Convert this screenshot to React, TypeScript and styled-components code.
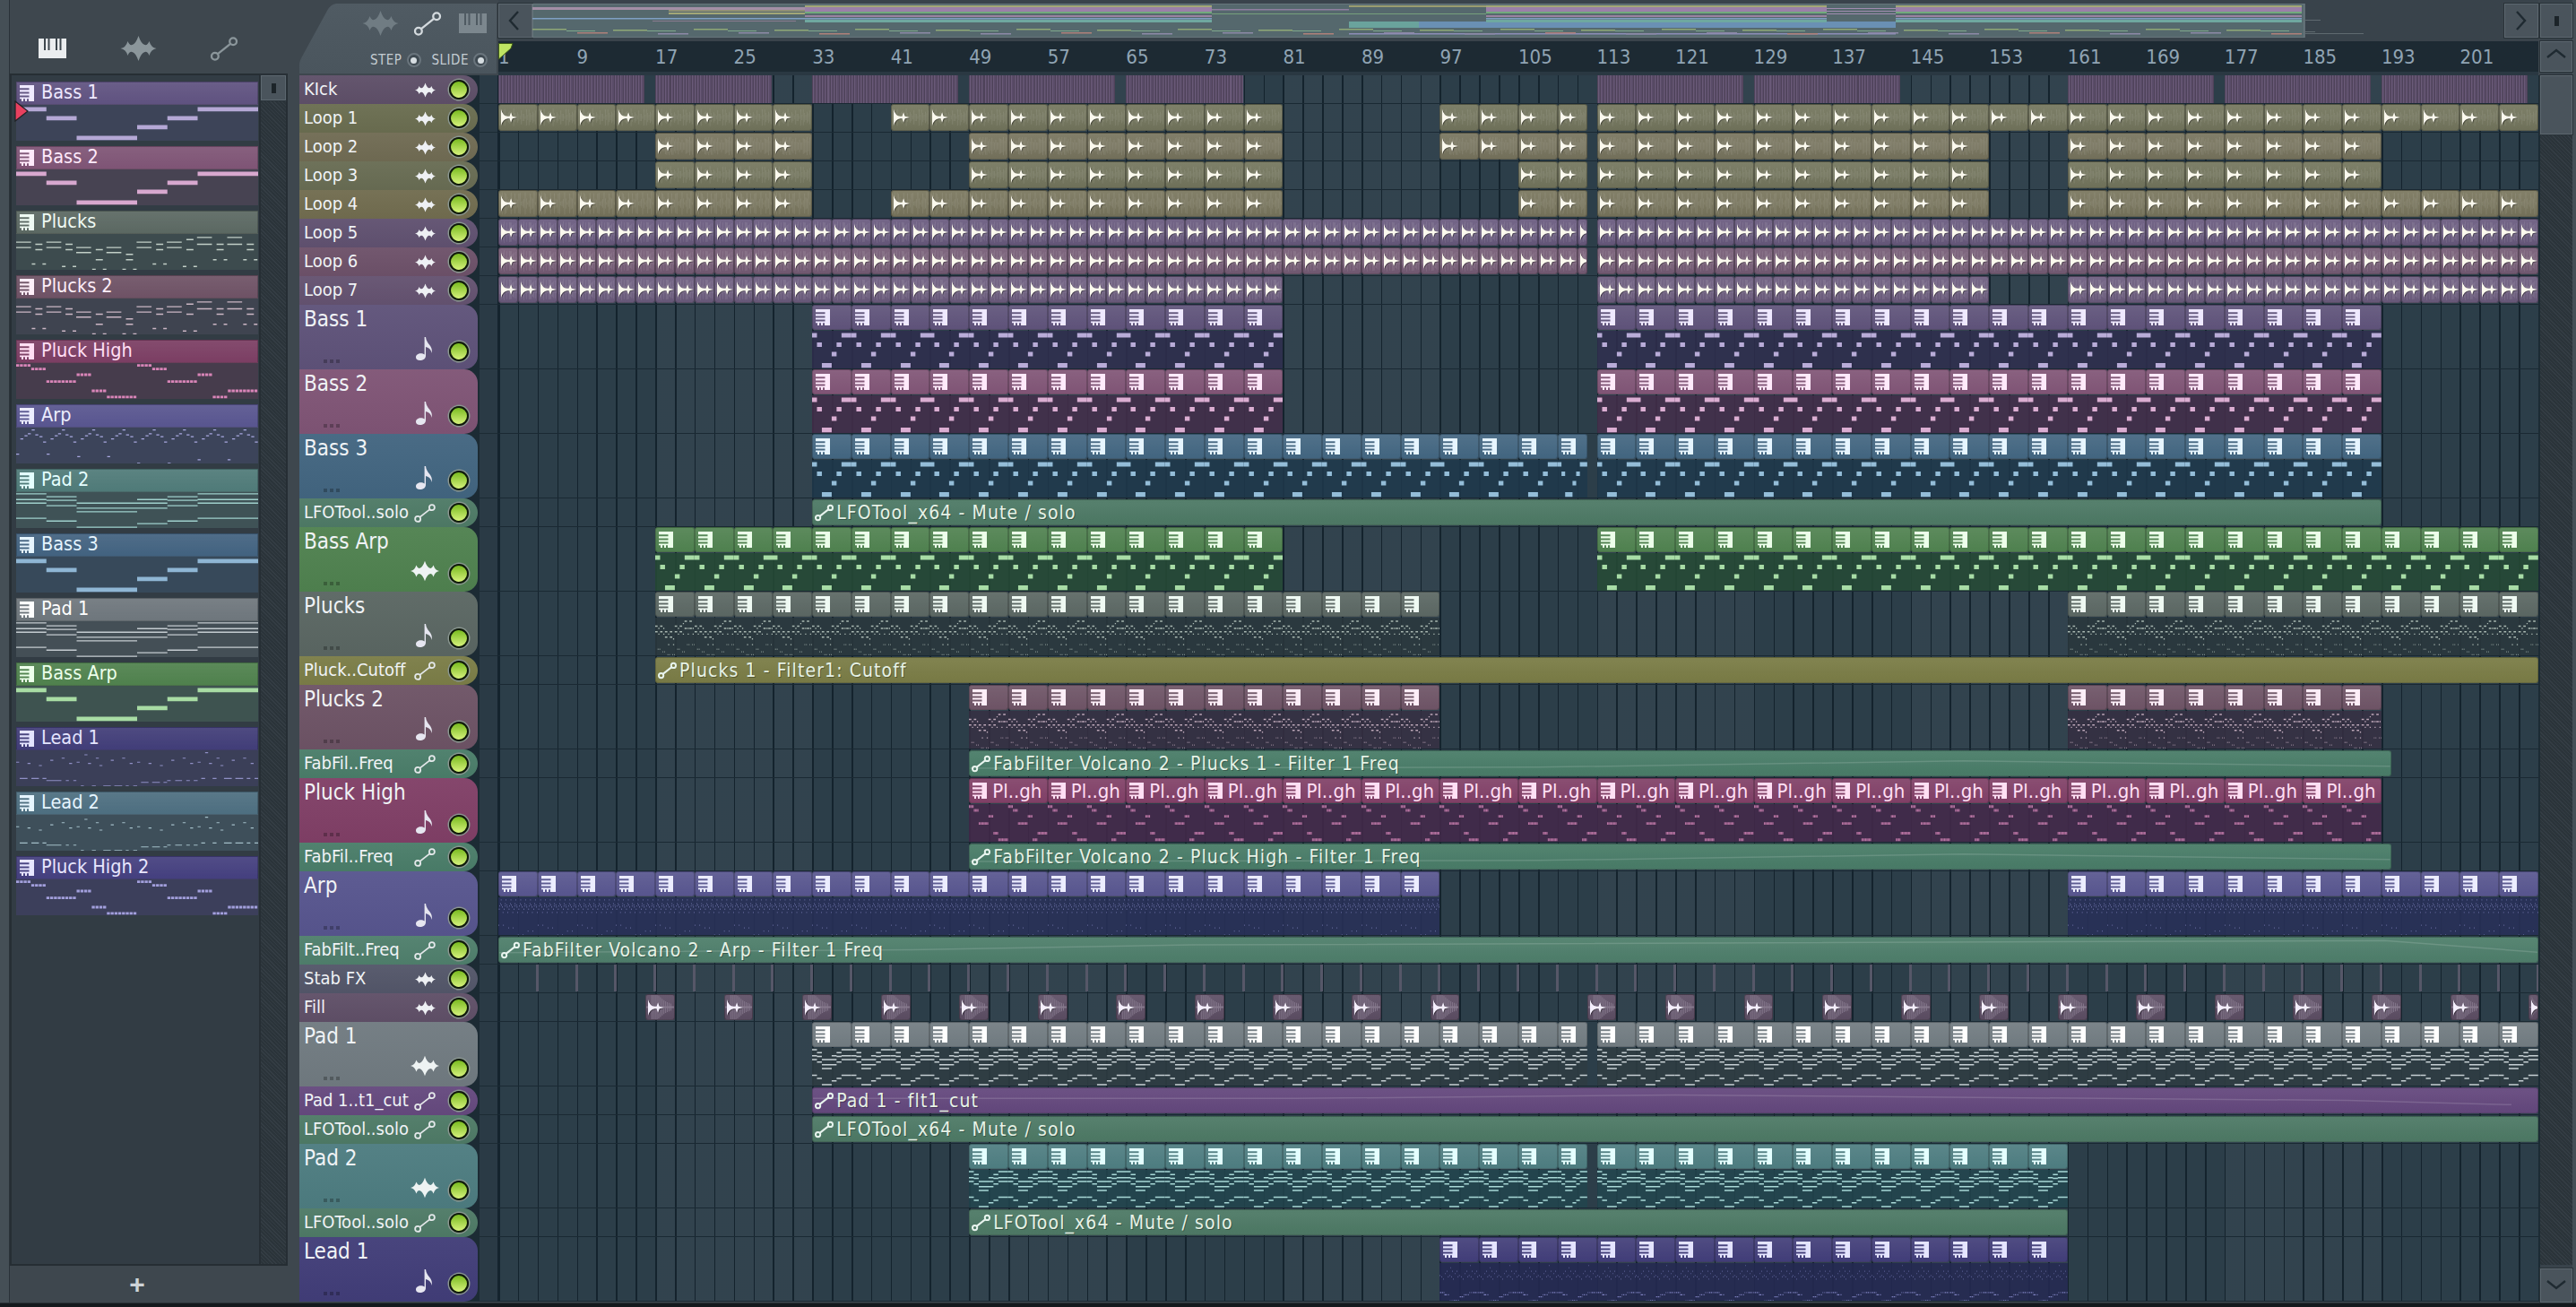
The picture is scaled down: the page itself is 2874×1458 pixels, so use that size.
import React from "react";
import styled, { createGlobalStyle } from "styled-components";

const FONT = `"DejaVu Sans Condensed", "Liberation Sans", sans-serif`;

const Global = createGlobalStyle`
  html, body { margin: 0; padding: 0; background: #3e474e; }
  #root { width: 2874px; height: 1458px; }
`;

/* ---------- pattern data ---------- */
type Note = [number, number, number, number];

const pathOf = (notes: Note[]) =>
  notes
    .map(([a, b, y, h]) => `M${(a * 1000).toFixed(1)} ${(y * 1000).toFixed(1)}H${(b * 1000).toFixed(1)}V${((y + h) * 1000).toFixed(1)}H${(a * 1000).toFixed(1)}Z`)
    .join("");

const bass: Note[] = [
  [0, 0.125, 0.06, 0.12],
  [0.125, 0.25, 0.31, 0.12],
  [0.25, 0.5, 0.86, 0.12],
  [0.5, 0.625, 0.56, 0.12],
  [0.625, 0.75, 0.31, 0.12],
  [0.75, 1, 0.06, 0.12],
];

const padRows: [number, number, number[]][] = [
  [0, 0.125, [0.04, 0.2, 0.3, 0.72]],
  [0.125, 0.25, [0.12, 0.22, 0.37, 0.8]],
  [0.25, 0.5, [0.3, 0.44, 0.54, 0.97]],
  [0.5, 0.625, [0.2, 0.3, 0.44, 0.87]],
  [0.625, 0.75, [0.12, 0.22, 0.37, 0.8]],
  [0.75, 1, [0.04, 0.2, 0.3, 0.72]],
];
const pad: Note[] = padRows.flatMap(([a, b, ys]) => ys.map((y) => [a, b, y - 0.01, 0.035] as Note));

const pl = (x0: number, x1: number, y: number): Note => [(x0 - 46) / 681, (x1 - 46) / 681, y, 0.035];
const plucks: Note[] = [
  pl(555, 597, 0.08), pl(640, 682, 0.08), pl(525, 545, 0.14),
  pl(46, 88, 0.21), pl(131, 173, 0.21), pl(385, 427, 0.21), pl(470, 512, 0.21),
  pl(46, 88, 0.36), pl(131, 173, 0.36), pl(385, 427, 0.36), pl(470, 512, 0.36),
  pl(100, 120, 0.27), pl(185, 205, 0.27), pl(440, 460, 0.27),
  pl(100, 120, 0.42), pl(185, 205, 0.42), pl(440, 460, 0.42),
  pl(215, 257, 0.36), pl(300, 342, 0.36), pl(215, 257, 0.5), pl(300, 342, 0.5),
  pl(270, 290, 0.42), pl(355, 375, 0.55),
  pl(525, 545, 0.42), pl(555, 597, 0.27), pl(640, 682, 0.27),
  pl(610, 630, 0.27), pl(610, 630, 0.42), pl(695, 715, 0.27), pl(695, 715, 0.42),
  pl(270, 290, 0.7), pl(355, 375, 0.7),
  pl(90, 100, 0.82), pl(120, 130, 0.82), pl(175, 185, 0.89), pl(205, 215, 0.89),
  pl(260, 270, 0.97), pl(290, 300, 0.97), pl(345, 355, 0.97), pl(375, 385, 0.97),
  pl(430, 440, 0.82), pl(460, 470, 0.82), pl(515, 525, 0.89), pl(545, 555, 0.89),
  pl(600, 610, 0.7), pl(630, 640, 0.7), pl(685, 695, 0.7), pl(715, 725, 0.7),
];

const squares = (from: number, to: number, y: number): Note[] => {
  const out: Note[] = [];
  for (let x = from; x < to - 0.001; x += 1 / 64) out.push([x, x + 1 / 80, y, 0.07]);
  return out;
};
const pluckHigh: Note[] = [
  ...squares(0, 0.0625, 0.03), ...squares(0.5, 0.5625, 0.03),
  ...squares(0.0625, 0.125, 0.13), ...squares(0.5625, 0.625, 0.13),
  ...squares(0.25, 0.3125, 0.29), ...squares(0.75, 0.8125, 0.29),
  ...squares(0.125, 0.25, 0.48), ...squares(0.625, 0.75, 0.48),
  ...squares(0.3125, 0.375, 0.74), ...squares(0.875, 1, 0.74),
  ...squares(0.375, 0.5, 0.91), ...squares(0.8125, 0.875, 0.91),
];

const ar = (x: number, y: number, w = 10): Note => [(x - 24) / 808, (x + w - 24) / 808, (y - 320) / 117, 0.032];
const arp: Note[] = [
  ...Array.from({ length: 8 }).flatMap((_, k) => {
    const o = k * 101;
    return [
      ar(38 + o, 355), ar(52 + o, 345), ar(63 + o, 338), ar(76 + o, 326),
      ar(88 + o, 342), ar(102 + o, 348), ar(114 + o, 365),
    ];
  }),
  ar(24, 405), ar(126, 405), ar(228, 413), ar(328, 413), ar(428, 435), ar(530, 435), ar(630, 423), ar(730, 423),
];

const le = (x: number, y: number, w = 10): Note => [(x - 24) / 808, (x + w - 24) / 808, (y - 320) / 117, 0.028];
const lead: Note[] = [
  ...([
    [24, 357], [62, 361], [100, 368], [138, 351], [176, 344], [201, 361], [226, 357], [252, 333], [264, 361],
    [290, 344], [302, 368], [340, 351], [378, 344], [403, 361], [428, 357], [466, 361], [504, 368], [542, 351],
    [580, 344], [605, 361], [630, 357], [655, 326], [668, 361], [693, 344], [706, 368], [744, 351], [782, 344], [807, 361],
  ] as [number, number][]).map(([x, y]) => le(x, y)),
  ...([
    [36, 410, 26], [75, 410, 25], [112, 410, 13], [125, 417, 25], [150, 417, 25], [190, 417, 10], [215, 417, 10],
    [240, 435, 10], [277, 435, 13], [315, 435, 25], [352, 435, 26], [390, 435, 10], [415, 435, 13],
    [441, 423, 25], [478, 423, 26], [516, 423, 12], [528, 417, 12], [555, 417, 23], [592, 417, 12], [617, 417, 13],
    [642, 410, 13], [680, 410, 13], [718, 410, 26], [756, 410, 26], [794, 410, 12], [820, 410, 12],
  ] as [number, number, number][]).map(([x, y, w]) => le(x, y, w)),
];

const PATTERNS: Record<string, string> = {
  bass: pathOf(bass),
  pad: pathOf(pad),
  plucks: pathOf(plucks),
  pluckHigh: pathOf(pluckHigh),
  arp: pathOf(arp),
  lead: pathOf(lead),
};

/* deterministic waveform */
const wavePath = (seed: number, base: number, spread: number, w = 88, h = 60, step = 3) => {
  let s = seed;
  const rnd = () => {
    s = (s * 9301 + 49297) % 233280;
    return s / 233280;
  };
  let d = "";
  for (let x = 1; x < w; x += step) {
    const a = base + rnd() * spread;
    d += `M${x} ${h / 2 - a}V${h / 2 + a}`;
  }
  return d;
};
const fillWave = () => {
  let d = "M0 29H88V31H0Z";
  for (let x = 6; x < 30; x += 2) {
    const a = 26 * Math.exp(-(x - 6) / 12);
    d += `M${x} ${30 - a}h1V${30 + a}h-1Z`;
  }
  return d;
};

/* ---------- track data ---------- */
type Seg = [number, number];
type Track = {
  name: string;
  tall?: boolean;
  color: string;
  clip?: string;
  icon: "wave" | "note" | "auto";
  kind?: "kick" | "audio" | "midi" | "auto" | "stab" | "fill";
  segs?: Seg[];
  size?: number;
  wave?: string;
  body?: string;
  noteColor?: string;
  pattern?: string;
  label?: string;
  text?: string;
  curve?: string;
  ink?: string;
};

const WAVE_A = wavePath(17, 3, 19);
const WAVE_B = wavePath(51, 8, 14);
const WAVE_C = wavePath(91, 2, 26);
const WAVE_D = wavePath(77, 5, 22, 44, 60, 2.2);

const TRACKS: Track[] = [
  { name: "KIck", color: "#5e4f68", icon: "wave", kind: "kick", segs: [[1, 16], [17, 29], [33, 48], [49, 64], [65, 77], [113, 128], [129, 144], [161, 176], [177, 192], [193, 208]] },
  { name: "Loop 1", color: "#6a6d50", clip: "#75775f", icon: "wave", kind: "audio", size: 4, wave: WAVE_A, segs: [[1, 33], [41, 81], [97, 112], [113, 209]] },
  { name: "Loop 2", color: "#706b53", clip: "#7a7660", icon: "wave", kind: "audio", size: 4, wave: WAVE_B, segs: [[17, 33], [49, 81], [97, 112], [113, 153], [161, 193]] },
  { name: "Loop 3", color: "#686c53", clip: "#75775f", icon: "wave", kind: "audio", size: 4, wave: WAVE_A, segs: [[17, 33], [49, 81], [105, 112], [113, 153], [161, 193]] },
  { name: "Loop 4", color: "#716c4f", clip: "#7b785f", icon: "wave", kind: "audio", size: 4, wave: WAVE_C, segs: [[1, 33], [41, 81], [105, 112], [113, 153], [161, 209]] },
  { name: "Loop 5", color: "#605170", clip: "#6b5c80", icon: "wave", kind: "audio", size: 2, wave: WAVE_D, segs: [[1, 112], [113, 209]] },
  { name: "Loop 6", color: "#6d5169", clip: "#775e78", icon: "wave", kind: "audio", size: 2, wave: WAVE_D, segs: [[1, 112], [113, 209]] },
  { name: "Loop 7", color: "#645270", clip: "#6e5e80", icon: "wave", kind: "audio", size: 2, wave: WAVE_D, segs: [[1, 81], [113, 153], [161, 209]] },
  { name: "Bass 1", tall: true, color: "#5e5279", icon: "note", kind: "midi", size: 4, pattern: "bass", body: "#2f2e4ed8", noteColor: "#b9acd8", ink: "#efe9ff", segs: [[33, 81], [113, 193]] },
  { name: "Bass 2", tall: true, color: "#7f5475", icon: "note", kind: "midi", size: 4, pattern: "bass", body: "#442e4ad8", noteColor: "#dbaed2", ink: "#ffeafb", segs: [[33, 81], [113, 193]] },
  { name: "Bass 3", tall: true, color: "#426580", icon: "note", kind: "midi", size: 4, pattern: "bass", body: "#1f394cd8", noteColor: "#94bdd8", ink: "#e6f5ff", segs: [[33, 112], [113, 193]] },
  { name: "LFOTool..solo", color: "#4e7a66", icon: "auto", kind: "auto", text: "LFOTool_x64 - Mute / solo", segs: [[33, 193]] },
  { name: "Bass Arp", tall: true, color: "#4f814f", icon: "wave", kind: "midi", size: 4, pattern: "bass", body: "#264a36e0", noteColor: "#a8dca6", ink: "#ecffea", segs: [[17, 81], [113, 209]] },
  { name: "Plucks", tall: true, color: "#5a6662", icon: "note", kind: "midi", size: 4, pattern: "plucks", body: "#2b383cd8", noteColor: "#a9b8b1", ink: "#effaf3", segs: [[17, 97], [161, 209]] },
  { name: "Pluck..Cutoff", color: "#7b7d47", icon: "auto", kind: "auto", text: "Plucks 1 - Filter1: Cutoff", segs: [[17, 209]] },
  { name: "Plucks 2", tall: true, color: "#6d5365", icon: "note", kind: "midi", size: 4, pattern: "plucks", body: "#362f42d8", noteColor: "#bda7b8", ink: "#fdeef8", segs: [[49, 97], [161, 193]] },
  { name: "FabFil..Freq", color: "#4a7d69", icon: "auto", kind: "auto", text: "FabFilter Volcano 2 - Plucks 1 - Filter 1 Freq", curve: "M0 70L400 66L700 40L1000 62", segs: [[49, 194]] },
  { name: "Pluck High", tall: true, color: "#803f66", icon: "note", kind: "midi", size: 8, pattern: "pluckHigh", label: "Pl..gh", body: "#43294ae0", noteColor: "#b874a2", ink: "#ffdff4", segs: [[49, 193]] },
  { name: "FabFil..Freq", color: "#4a7d69", icon: "auto", kind: "auto", text: "FabFilter Volcano 2 - Pluck High - Filter 1 Freq", curve: "M0 70L400 66L700 40L1000 62", segs: [[49, 194]] },
  { name: "Arp", tall: true, color: "#57558e", icon: "note", kind: "midi", size: 4, pattern: "arp", body: "#283058e0", noteColor: "#8f92cf", ink: "#ecedff", segs: [[1, 97], [161, 209]] },
  { name: "FabFilt..Freq", color: "#4f7f6c", icon: "auto", kind: "auto", text: "FabFilter Volcano 2 - Arp - Filter 1 Freq", curve: "M0 62L200 50L340 30L925 12L1000 60", segs: [[1, 209]] },
  { name: "Stab FX", color: "#535669", icon: "wave", kind: "stab" },
  { name: "Fill", color: "#5f4f67", icon: "wave", kind: "fill" },
  { name: "Pad 1", tall: true, color: "#707a80", icon: "wave", kind: "midi", size: 4, pattern: "pad", body: "#2f3c42e0", noteColor: "#c6cfd3", ink: "#ffffff", segs: [[33, 112], [113, 209]] },
  { name: "Pad 1..t1_cut", color: "#65497e", icon: "auto", kind: "auto", text: "Pad 1 - flt1_cut", curve: "M0 42L280 42L500 28L890 50L985 68", segs: [[33, 209]] },
  { name: "LFOTool..solo", color: "#4e7a66", icon: "auto", kind: "auto", text: "LFOTool_x64 - Mute / solo", segs: [[33, 209]] },
  { name: "Pad 2", tall: true, color: "#4d7c80", icon: "wave", kind: "midi", size: 4, pattern: "pad", body: "#22464ed8", noteColor: "#a8d8d6", ink: "#e4ffff", segs: [[49, 112], [113, 161]] },
  { name: "LFOTool..solo", color: "#4e7a66", icon: "auto", kind: "auto", text: "LFOTool_x64 - Mute / solo", segs: [[49, 161]] },
  { name: "Lead 1", tall: true, color: "#413d78", icon: "note", kind: "midi", size: 4, pattern: "lead", body: "#242952e0", noteColor: "#7f82c0", ink: "#e4e4ff", segs: [[97, 161]] },
];

const LIST = [
  { name: "Bass 1", head: "#5f5280", body: "#3d4458", note: "#b5a8d5", ink: "#efe9ff", pattern: "bass" },
  { name: "Bass 2", head: "#7e5475", body: "#474352", note: "#d8a8cf", ink: "#ffeafb", pattern: "bass" },
  { name: "Plucks", head: "#5b6862", body: "#3d4b4e", note: "#c2cfc7", ink: "#effaf3", pattern: "plucks" },
  { name: "Plucks 2", head: "#6e5265", body: "#3f4450", note: "#cbb6c4", ink: "#fdeef8", pattern: "plucks" },
  { name: "Pluck High", head: "#7b3e63", body: "#463c4c", note: "#d985b8", ink: "#ffdff4", pattern: "pluckHigh" },
  { name: "Arp", head: "#58558f", body: "#3c445a", note: "#a8a8e0", ink: "#ecedff", pattern: "arp" },
  { name: "Pad 2", head: "#4f7a78", body: "#3f5256", note: "#9fd0cc", ink: "#e4ffff", pattern: "pad" },
  { name: "Bass 3", head: "#426280", body: "#37495a", note: "#8fb6d4", ink: "#e6f5ff", pattern: "bass" },
  { name: "Pad 1", head: "#6e767c", body: "#444f56", note: "#c4cbd0", ink: "#ffffff", pattern: "pad" },
  { name: "Bass Arp", head: "#4f814d", body: "#3e5350", note: "#a8dca4", ink: "#ecffea", pattern: "bass" },
  { name: "Lead 1", head: "#413d78", body: "#3b3f58", note: "#8f8fc4", ink: "#e4e4ff", pattern: "lead" },
  { name: "Lead 2", head: "#4d6e80", body: "#3e4f5a", note: "#a3bec8", ink: "#e6f5ff", pattern: "lead" },
  { name: "Pluck High 2", head: "#443f7e", body: "#3c3f5b", note: "#a29fdc", ink: "#e8e6ff", pattern: "pluckHigh" },
];

/* overview bands in page coordinates: x0, x1, y, h, colour */
const STACK: Seg[] = [[900, 1354], [1660, 2040], [2117, 2570]];
const OV: [number, number, number, number, string][] = [
  [596, 900, 8, 3, "#a38fa6"],
  [748, 900, 14, 2, "#a3a777"],
  [748, 900, 11, 2, "#8f8f74"],
  [596, 900, 20, 1.5, "#7f9fc4"],
  [730, 890, 23, 1, "#8a7a90"],
  [1354, 1507, 10, 1.5, "#8f7fa0"],
  [1354, 1660, 15, 1, "#76a07c"],
  [1507, 1660, 6, 2, "#9a9c70"],
  [2040, 2117, 9, 1, "#a08cb0"],
  [2040, 2117, 12, 1, "#a08cb0"],
  [2040, 2117, 15, 1, "#a08cb0"],
  [1507, 2117, 24, 7, "#6a90b4"],
  [1507, 1585, 24, 7, "#6aa39c"],
  [1507, 2117, 37, 1.5, "#8d8db8"],
  ...STACK.flatMap(([a, b]): [number, number, number, number, string][] => [
    [a, b, 6, 2, "#a3a777"],
    [a, b, 8, 5, "#9a80a8"],
    [a, b, 13, 2, "#72aa7c"],
    [a, b, 17, 2, "#9a83a0"],
    [a, b, 20, 1.5, "#7f9fc4"],
    [a, b, 22, 3, "#6fa8a0"],
  ]),
  ...Array.from({ length: 22 }).flatMap((_, k): [number, number, number, number, string][] => {
    const x = 596 + k * 90;
    return [
      [x, x + 38, 32 + (k % 2), 1.5, "#8fa877"],
      [x + 38, x + 70, 34, 1, "#7fa88c"],
      [x + 50, x + 84, 36 + (k % 2), 1.5, k % 3 === 0 ? "#b0807a" : "#8d8aa8"],
    ];
  }),
];

/* ---------- icons ---------- */
const IconSvg = styled.svg<{ $c: string }>`
  color: ${(p) => p.$c};
  display: block;
  flex: none;
`;
const WaveIcon = ({ w, h, c }: { w: number; h: number; c: string }) => (
  <IconSvg $c={c} width={w} height={h} viewBox="0 0 40 28">
    <path fill="currentColor" d="M0 14Q6 13 8 6Q10 11 13 10Q17 9 20 0Q23 9 27 10Q30 11 32 6Q34 13 40 14Q34 15 32 22Q30 17 27 18Q23 19 20 28Q17 19 13 18Q10 17 8 22Q6 15 0 14Z" />
  </IconSvg>
);
const AutoIcon = ({ w, h, c, sw = 2.6 }: { w: number; h: number; c: string; sw?: number }) => (
  <IconSvg $c={c} width={w} height={h} viewBox="0 0 32 28">
    <g fill="none" stroke="currentColor" strokeWidth={sw}>
      <circle cx="5.5" cy="22.5" r="4" />
      <circle cx="26.5" cy="5.5" r="4" />
      <path d="M9 19.5L23 8.5" />
    </g>
  </IconSvg>
);
const PianoIcon = ({ c }: { c: string }) => (
  <IconSvg $c={c} width={31} height={22} viewBox="0 0 31 22">
    <path fill="currentColor" fillRule="evenodd" d="M0 0H31V22H0ZM6 0V13H8V0ZM10.5 0V13H12.5V0ZM19 0V13H21V0ZM23.5 0V13H25.5V0Z" />
  </IconSvg>
);
const NoteIcon = ({ c }: { c: string }) => (
  <IconSvg $c={c} width={20} height={27} viewBox="0 0 20 27">
    <path fill="currentColor" d="M9.6 1H11C11.5 5 13 7 15 9.5C17.5 12.5 18.5 15 17.5 19C17.2 15.5 15 13 11 12V22C11 25 8 27 4.5 27C1.5 27 0 25.4 0 23.4C0 21 2.5 19.2 5.5 19.2C7 19.2 8.6 19.7 9.6 20.6Z" />
  </IconSvg>
);
const MidiGlyph = ({ c }: { c: string }) => (
  <IconSvg $c={c} width={16} height={18} viewBox="0 0 16 18">
    <path fill="currentColor" fillRule="evenodd" d="M0 0H16V18H0ZM0 3.2V5.2H10.5V3.2ZM0 7.4V9.4H10.5V7.4ZM0 11.6V13.6H10.5V11.6ZM0 15.2V18H2V15.2ZM4 15.2V18H6V15.2ZM8 15.2V18H10V15.2Z" />
  </IconSvg>
);
const AudioGlyph = ({ c }: { c: string }) => (
  <IconSvg $c={c} width={18} height={18} viewBox="0 0 17 17">
    <path fill="#0006" transform="translate(.8 .8)" d="M0 0Q2 7 7 7.4L9 7.4L10.5 3L12 7.4L17 8.5L12 9.6L10.5 14L9 9.6L7 9.6Q2 10 0 17Z" />
    <path fill="currentColor" d="M0 0Q2 7 7 7.4L9 7.4L10.5 3L12 7.4L17 8.5L12 9.6L10.5 14L9 9.6L7 9.6Q2 10 0 17Z" />
  </IconSvg>
);
const Chevron = ({ dir }: { dir: "l" | "r" | "u" | "d" }) => {
  const pts = { l: "17,6 8,16 17,26", r: "9,6 18,16 9,26", u: "4,17 14,9 24,17", d: "4,11 14,19 24,11" }[dir];
  return (
    <IconSvg $c="#1f2a31" width={28} height={32} viewBox="0 0 28 32">
      <polyline points={pts} fill="none" stroke="currentColor" strokeWidth="2.4" />
    </IconSvg>
  );
};

/* ---------- layout ---------- */
const Root = styled.div`
  width: 2874px;
  height: 1458px;
  display: flex;
  flex-direction: column;
  background: #3e474e;
  overflow: hidden;
  font-family: ${FONT};
`;
const Main = styled.div`
  height: 1453px;
  display: flex;
`;
const Footer = styled.div`
  height: 5px;
  background: #14191d;
  border-top: 1px solid #2a3238;
  box-sizing: border-box;
`;
const LeftPanel = styled.aside`
  width: 334px;
  box-sizing: border-box;
  border-left: 10px solid #454f56;
  display: flex;
  flex-direction: column;
  padding: 0 13px 0 1px;
  box-shadow: inset 1px 0 #2a3238;
`;
const ToolBar = styled.div`
  height: 82px;
  box-sizing: border-box;
  padding-top: 26px;
  display: grid;
  grid-template-columns: repeat(3, 95.5px);
  place-items: center;
`;
const ListPanel = styled.div`
  height: 1330px;
  box-sizing: border-box;
  border: 2px solid #262e34;
  display: flex;
  position: relative;
`;
const ClipColumn = styled.div`
  flex: 1;
  background: #323c44;
  border-right: 2px solid #262e34;
  padding: 7px 0 0 5px;
  display: flex;
  flex-direction: column;
  gap: 6px;
`;
const ListClip = styled.div`
  width: 270px;
  height: 66px;
  display: flex;
  flex-direction: column;
`;
const ListHead = styled.div<{ $c: string; $ink: string }>`
  height: 26px;
  box-sizing: border-box;
  background: linear-gradient(#ffffff12, #ffffff00), ${(p) => p.$c};
  border: 1px solid #0000002e;
  display: flex;
  align-items: center;
  gap: 8px;
  padding-left: 3px;
  color: ${(p) => p.$ink};
  font-size: 21.5px;
  line-height: 24px;
  white-space: nowrap;
`;
const ListName = styled.span`
  margin-bottom: 2px;
`;
const ListBody = styled.div<{ $c: string; $note: string }>`
  flex: 1;
  background: ${(p) => p.$c};
  color: ${(p) => p.$note};
  min-height: 0;
`;
const NotesSvg = styled.svg`
  display: block;
  width: 100%;
  height: 100%;
`;
const PlayMark = styled.svg`
  position: absolute;
  left: 3px;
  top: 28px;
`;
const Hatch = styled.div`
  background: repeating-linear-gradient(45deg, #343d44 0 1px, #2b343a 1px 3px);
`;
const ListScroll = styled(Hatch)`
  width: 28px;
`;
const SquareBtn = styled.div<{ $w?: number; $h?: number }>`
  width: ${(p) => p.$w ?? 38}px;
  height: ${(p) => p.$h ?? 38}px;
  box-sizing: border-box;
  background: #4a545c;
  border: 1px solid #5c676f;
  outline: 1px solid #2a3339;
  display: flex;
  align-items: center;
  justify-content: center;
  flex: none;
`;
const Pip = styled.i`
  width: 5px;
  height: 11px;
  background: #1c2429;
`;
const ListThumb = styled(SquareBtn)`
  width: 28px;
  height: 28px;
`;
const AddBar = styled.div`
  flex: 1;
  padding-right: 26px;
  display: flex;
  align-items: center;
  justify-content: center;
  color: #ced4d8;
  font: bold 30px "Liberation Sans", sans-serif;
`;
const Center = styled.div`
  width: 2500px;
  display: flex;
  flex-direction: column;
`;
const TopRow = styled.div`
  height: 84px;
  display: flex;
`;
const ModeTab = styled.div`
  width: 220px;
  height: 78px;
  margin: 4px 2px 0 0;
  background: linear-gradient(#505b63, #4a555d);
  clip-path: path("M0 78V68C0 66 1 63 2 61L31 8C33 4 37 0 42 0H220V78Z");
  display: flex;
  flex-direction: column;
`;
const TabIcons = styled.div`
  height: 44px;
  display: grid;
  grid-template-columns: 70px 40px 66px 34px;
  place-items: center;
`;
const TabOptions = styled.div`
  flex: 1;
  display: flex;
  justify-content: flex-end;
  align-items: flex-start;
  gap: 5px;
  padding: 9px 10px 0 0;
  color: #c4ccd2;
  font-size: 15px;
  letter-spacing: 0.5px;
`;
const OptLabel = styled.span<{ $gap?: number }>`
  margin-left: ${(p) => p.$gap ?? 0}px;
  line-height: 20px;
`;
const Radio = styled.i`
  width: 16px;
  height: 16px;
  margin-top: 2px;
  box-sizing: border-box;
  border-radius: 50%;
  border: 2px solid #6a757d;
  background: #3f4a52;
  display: flex;
  align-items: center;
  justify-content: center;
  &::after {
    content: "";
    width: 7px;
    height: 7px;
    border-radius: 50%;
    background: #d6dde1;
  }
`;
const Timeline = styled.div`
  width: 2276px;
  display: flex;
  flex-direction: column;
`;
const NavRow = styled.div`
  height: 46px;
  box-sizing: border-box;
  padding: 4px 0 0 0;
  background: #39434b;
  display: flex;
  align-items: flex-start;
`;
const Overview = styled.div`
  width: 2200px;
  height: 38px;
  flex: none;
`;
const OverviewSvg = styled.svg`
  display: block;
`;
const Ruler = styled.div`
  height: 38px;
  box-sizing: border-box;
  display: grid;
  grid-template-columns: repeat(26, 1fr);
  background: #1d2a33;
  border-bottom: 4px solid #2a3842;
  position: relative;
  color: #90a4b4;
  font-size: 22px;
  line-height: 36px;
`;
const RulerMark = styled.span`
  white-space: nowrap;
`;
const PlayHead = styled.svg`
  position: absolute;
  left: 0;
  top: 2px;
`;
const TrackRow = styled.div<{ $tall?: boolean }>`
  height: ${(p) => (p.$tall ? 72 : 32)}px;
  display: flex;
  background: #1c2b34;
`;
const Header = styled.div<{ $c: string; $tall?: boolean }>`
  width: 199px;
  height: 100%;
  box-sizing: border-box;
  background: linear-gradient(#ffffff0a, #00000006), ${(p) => p.$c};
  border-radius: 0 ${(p) => (p.$tall ? 15 : 16)}px ${(p) => (p.$tall ? 15 : 16)}px 0;
  display: grid;
  grid-template-columns: 123px 34px 42px;
  grid-template-rows: ${(p) => (p.$tall ? "32px 40px" : "32px")};
  align-items: center;
  justify-items: center;
  color: #f0f3f6;
`;
const Name = styled.span<{ $tall?: boolean }>`
  justify-self: start;
  padding-left: 5px;
  margin-bottom: ${(p) => (p.$tall ? 0 : 3)}px;
  white-space: nowrap;
  font-size: ${(p) => (p.$tall ? 24 : 20)}px;
`;
const Dots = styled.div`
  justify-self: start;
  align-self: end;
  margin: 0 0 7px 27px;
  display: flex;
  gap: 3px;
`;
const Dot = styled.i`
  width: 4px;
  height: 4px;
  background: #00000040;
`;
const IconCell = styled.div<{ $tall?: boolean }>`
  margin-bottom: ${(p) => (p.$tall ? 7 : 0)}px;
`;
const Led = styled.i`
  width: 22px;
  height: 22px;
  box-sizing: border-box;
  border-radius: 50%;
  background: linear-gradient(#79ba20, #d6f27c);
  border: 2px solid #0f1a0a;
  box-shadow: 0 0 0 1.5px #8a9690;
`;
const Gutter = styled.div`
  width: 21px;
  box-sizing: border-box;
  margin-left: 2px;
  background: #2a3a45;
  border-right: 1px solid #14232d;
  border-bottom: 1px solid #1c2b34;
`;
const Lane = styled.div`
  width: 2276px;
  display: grid;
  grid-template-columns: repeat(208, minmax(0, 1fr));
  grid-template-rows: minmax(0, 1fr);
  overflow: hidden;
  border-bottom: 1px solid #1a2933;
  box-sizing: border-box;
  background-color: #2c3e49;
  background-image:
    repeating-linear-gradient(90deg, #14232d 0 1.6px, transparent 1.6px 21.885px),
    repeating-linear-gradient(90deg, transparent 0 175.08px, #ffffff07 175.08px 350.16px);
`;
const KickBlock = styled.div`
  grid-row: 1;
  margin: 0 1px 0 0;
  background: repeating-linear-gradient(90deg, #4e4259 0 1px, #6a5a78 1px 2px, #5a4c68 2px 3.3px);
`;
const AudioClip = styled.div<{ $c: string; $wave?: string }>`
  grid-row: 1;
  position: relative;
  min-width: 0;
  overflow: hidden;
  box-sizing: border-box;
  margin: 0 0 1px;
  border-radius: 3px;
  border: 1px solid #00000040;
  background: linear-gradient(#ffffff10, #00000010), ${(p) => p.$c};
  color: ${(p) => p.$wave ?? "#ffffff2e"};
`;
const WaveSvg = styled.svg`
  position: absolute;
  inset: 0;
  width: 100%;
  height: 100%;
`;
const GlyphSlot = styled.div`
  position: absolute;
  left: 2px;
  top: 5px;
`;
const MidiClip = styled.div`
  grid-row: 1;
  display: flex;
  flex-direction: column;
  min-width: 0;
  overflow: hidden;
`;
const MidiHead = styled.div<{ $c: string; $ink: string }>`
  height: 28px;
  flex: none;
  box-sizing: border-box;
  border-radius: 3px;
  border: 1px solid #00000030;
  background: linear-gradient(#ffffff14, #ffffff00), ${(p) => p.$c};
  display: flex;
  align-items: center;
  gap: 6px;
  padding-left: 3px;
  color: ${(p) => p.$ink};
  font-size: 22px;
  white-space: nowrap;
`;
const MidiBody = styled.div<{ $c: string; $note: string }>`
  flex: 1;
  min-height: 0;
  margin-top: 1px;
  background: ${(p) => p.$c};
  color: ${(p) => p.$note};
`;
const AutoClip = styled.div<{ $c: string }>`
  grid-row: 1;
  position: relative;
  min-width: 0;
  overflow: hidden;
  box-sizing: border-box;
  margin: 1px 0;
  border-radius: 3px;
  border: 1px solid #00000030;
  background: linear-gradient(#ffffff0c, #00000008), ${(p) => p.$c};
  display: flex;
  align-items: center;
  gap: 3px;
  padding-left: 2px;
  color: #e6f2e6;
  font-size: 21px;
  letter-spacing: 1.1px;
  white-space: nowrap;
  text-shadow: 1px 1px 0 #0000004d;
`;
const CurveSvg = styled.svg`
  position: absolute;
  inset: 0;
  width: 100%;
  height: 100%;
`;
const StabMark = styled.i`
  grid-row: 1;
  justify-self: end;
  width: 3px;
  margin: 0 -1px 1px 0;
  background: #565768;
`;
const FillClip = styled(AudioClip)`
  margin: 1px 0 1px;
`;
const ScrollCol = styled.div`
  width: 40px;
  box-sizing: border-box;
  border-right: 4px solid #454f56;
  padding: 4px 0 0 0;
  background: #39434b;
  display: flex;
  flex-direction: column;
  gap: 4px;
`;
const ScrollTrack = styled(Hatch)`
  flex: 1;
`;
const Thumb = styled(SquareBtn)`
  width: 36px;
  height: 66px;
`;

/* ---------- parts ---------- */
const Notes = ({ pattern }: { pattern: string }) => (
  <NotesSvg viewBox="0 0 1000 1000" preserveAspectRatio="none">
    <path fill="currentColor" d={PATTERNS[pattern]} />
  </NotesSvg>
);

const chunks = (a: number, b: number, size: number) => {
  const out: [number, number][] = [];
  for (let s = a; s < b; s += size) out.push([s, Math.min(size, b - s)]);
  return out;
};
const span = (start: number, n: number) => ({ gridColumn: `${start} / span ${n}` });

const FILL_WAVE = fillWave();
const FILL_BARS = [
  ...chunks(16, 104, 8).map((c) => c[0]),
  ...chunks(112, 216, 8).map((c) => c[0]),
];

const LaneContent = ({ t }: { t: Track }) => {
  if (t.kind === "kick")
    return <>{t.segs!.map(([a, b]) => <KickBlock key={a} style={span(a, b - a)} />)}</>;
  if (t.kind === "stab")
    return <>{chunks(4, 212, 4).map(([s]) => <StabMark key={s} style={span(s, 1)} />)}</>;
  if (t.kind === "fill")
    return (
      <>
        {FILL_BARS.map((s) => (
          <FillClip key={s} $c="#5f5066" $wave="#85788c" style={span(s, Math.min(3, 209 - s))}>
            <WaveSvg viewBox="0 0 32 60" preserveAspectRatio="xMinYMid slice">
              <path fill="currentColor" d={FILL_WAVE} />
            </WaveSvg>
            <GlyphSlot>
              <AudioGlyph c="#f4eefc" />
            </GlyphSlot>
          </FillClip>
        ))}
      </>
    );
  if (t.kind === "auto")
    return (
      <>
        {t.segs!.map(([a, b]) => (
          <AutoClip key={a} $c={t.color} style={span(a, b - a)}>
            {t.curve && (
              <CurveSvg viewBox="0 0 1000 100" preserveAspectRatio="none">
                <path d={t.curve} fill="none" stroke="#ffffff24" strokeWidth="1.5" vectorEffect="non-scaling-stroke" />
              </CurveSvg>
            )}
            <AutoIcon w={21} h={20} c="#e8f4ee" sw={3} />
            <span>{t.text}</span>
          </AutoClip>
        ))}
      </>
    );
  const all = t.segs!.flatMap(([a, b]) => chunks(a, b, t.size!));
  if (t.kind === "audio")
    return (
      <>
        {all.map(([s, n]) => (
          <AudioClip key={s} $c={t.clip ?? t.color} style={span(s, n)}>
            <WaveSvg viewBox={`0 0 ${t.size === 2 ? 44 : 88} 60`} preserveAspectRatio="none">
              <path stroke="currentColor" strokeWidth="1.1" fill="none" d={t.wave} />
            </WaveSvg>
            <GlyphSlot>
              <AudioGlyph c="#fbf9ee" />
            </GlyphSlot>
          </AudioClip>
        ))}
      </>
    );
  return (
    <>
      {all.map(([s, n]) => (
        <MidiClip key={s} style={span(s, n)}>
          <MidiHead $c={t.color} $ink={t.ink!}>
            <MidiGlyph c={t.ink!} />
            {t.label && <span>{t.label}</span>}
          </MidiHead>
          <MidiBody $c={t.body!} $note={t.noteColor!}>
            <Notes pattern={t.pattern!} />
          </MidiBody>
        </MidiClip>
      ))}
    </>
  );
};

const TrackLine = ({ t }: { t: Track }) => (
  <TrackRow $tall={t.tall}>
    <Header $c={t.color} $tall={t.tall}>
      <Name $tall={t.tall}>{t.name}</Name>
      {t.tall && <span />}
      {t.tall && <span />}
      {t.tall && (
        <Dots>
          <Dot />
          <Dot />
          <Dot />
        </Dots>
      )}
      <IconCell $tall={t.tall}>
        {t.icon === "wave" && (t.tall ? <WaveIcon w={32} h={24} c="#eef3f3" /> : <WaveIcon w={23} h={17} c="#eef0f4" />)}
        {t.icon === "note" && <NoteIcon c="#e6e6f0" />}
        {t.icon === "auto" && <AutoIcon w={24} h={21} c="#e4e8ea" sw={2.4} />}
      </IconCell>
      <Led />
    </Header>
    <Gutter />
    <Lane>
      <LaneContent t={t} />
    </Lane>
  </TrackRow>
);

const BAR_LABELS = Array.from({ length: 26 }, (_, i) => 1 + i * 8);

export default function App() {
  return (
    <Root>
      <Global />
      <Main>
        <LeftPanel>
          <ToolBar>
            <PianoIcon c="#eaedef" />
            <WaveIcon w={41} h={28} c="#8b969b" />
            <AutoIcon w={32} h={27} c="#8b969b" sw={2.4} />
          </ToolBar>
          <ListPanel>
            <ClipColumn>
              {LIST.map((c) => (
                <ListClip key={c.name}>
                  <ListHead $c={c.head} $ink={c.ink}>
                    <MidiGlyph c={c.ink} />
                    <ListName>{c.name}</ListName>
                  </ListHead>
                  <ListBody $c={c.body} $note={c.note}>
                    <Notes pattern={c.pattern} />
                  </ListBody>
                </ListClip>
              ))}
            </ClipColumn>
            <PlayMark width="16" height="24" viewBox="0 0 16 24">
              <path d="M1 1L15 12L1 23Z" fill="#e8405f" stroke="#1e2024" strokeWidth="1.2" />
            </PlayMark>
            <ListScroll>
              <ListThumb>
                <Pip />
              </ListThumb>
            </ListScroll>
          </ListPanel>
          <AddBar>+</AddBar>
        </LeftPanel>
        <Center>
          <TopRow>
            <ModeTab>
              <TabIcons>
                <span />
                <WaveIcon w={41} h={28} c="#707c83" />
                <AutoIcon w={32} h={27} c="#d4dade" sw={2.4} />
                <PianoIcon c="#7c878e" />
              </TabIcons>
              <TabOptions>
                <OptLabel>STEP</OptLabel>
                <Radio />
                <OptLabel $gap={7}>SLIDE</OptLabel>
                <Radio />
              </TabOptions>
            </ModeTab>
            <Timeline>
              <NavRow>
                <SquareBtn>
                  <Chevron dir="l" />
                </SquareBtn>
                <Overview>
                  <OverviewSvg width="2200" height="38" viewBox="596 4 2200 38">
                    <rect x="596" y="4" width="1977" height="38" fill="#55686d" />
                    <rect x="596" y="4" width="1977" height="38" fill="none" stroke="#6c7a80" strokeWidth="1.5" />
                    {OV.map(([a, b, y, h, c], i) => (
                      <rect key={i} x={a} y={y} width={Math.min(b, 2570) - Math.min(a, 2570)} height={h} fill={c} />
                    ))}
                    <rect x="2573" y="22" width="18" height="1" fill="#5f6a70" />
                    <rect x="2573" y="35" width="12" height="1" fill="#5f6a70" />
                    <rect x="2573" y="37" width="66" height="1" fill="#5f6a70" />
                  </OverviewSvg>
                </Overview>
                <SquareBtn>
                  <Chevron dir="r" />
                </SquareBtn>
              </NavRow>
              <Ruler>
                {BAR_LABELS.map((n) => (
                  <RulerMark key={n}>{n}</RulerMark>
                ))}
                <PlayHead width="17" height="19" viewBox="0 0 17 19">
                  <path d="M0.5 0.5H16L14 6L0.5 18Z" fill="#bfe463" stroke="#3e5a18" />
                </PlayHead>
              </Ruler>
            </Timeline>
          </TopRow>
          {TRACKS.map((t, i) => (
            <TrackLine key={i} t={t} />
          ))}
        </Center>
        <ScrollCol>
          <SquareBtn $w={36}>
            <Pip />
          </SquareBtn>
          <SquareBtn $w={36} $h={34}>
            <Chevron dir="u" />
          </SquareBtn>
          <ScrollTrack>
            <Thumb />
          </ScrollTrack>
          <SquareBtn $w={36}>
            <Chevron dir="d" />
          </SquareBtn>
        </ScrollCol>
      </Main>
      <Footer />
    </Root>
  );
}
